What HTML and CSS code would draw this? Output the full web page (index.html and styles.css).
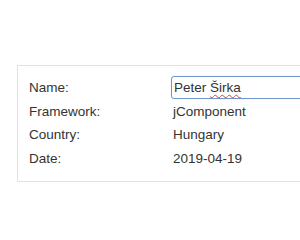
FILE: index.html
```html
<!doctype html>
<html lang="en">
<head>
  <meta charset="UTF-8">
  <title>Form</title>
  <link rel="stylesheet" href="styles.css">
</head>
<body>
  <div class="page">
    <div class="panel">
      <div class="row">
        <div class="label">Name:</div>
        <div class="value">
          <div class="field">Peter <span class="typo">Širka</span></div>
        </div>
      </div>
      <div class="row">
        <div class="label">Framework:</div>
        <div class="value">jComponent</div>
      </div>
      <div class="row">
        <div class="label">Country:</div>
        <div class="value">Hungary</div>
      </div>
      <div class="row">
        <div class="label">Date:</div>
        <div class="value">2019-04-19</div>
      </div>
    </div>
  </div>
</body>
</html>
```

FILE: styles.css
```css
html, body {
  margin: 0;
  padding: 0;
  background: #fff;
}
.page {
  width: 300px;
  height: 240px;
  overflow: hidden;
  padding: 65px 0 0 17px;
  box-sizing: border-box;
  font-family: "Liberation Sans", Arial, sans-serif;
  font-size: 13.5px;
  color: #333;
}
.panel {
  width: 320px;
  border: 1px solid #e2e2e2;
  padding: 10px 11px 11px;
}
.row {
  display: grid;
  grid-template-columns: 142px 1fr;
  height: 23.5px;
  line-height: 23.5px;
}
.value {
  padding-left: 2px;
}
.field {
  margin-left: -2px;
  height: 21px;
  line-height: 21px;
  padding-left: 2px;
  border: 1px solid #7096cc;
  border-radius: 3px;
  box-shadow: 0 0 1px rgba(80, 130, 200, 0.4);
}
.typo {
  text-decoration: underline wavy #e04040;
  text-decoration-thickness: 1px;
  text-underline-offset: 2px;
}
```
